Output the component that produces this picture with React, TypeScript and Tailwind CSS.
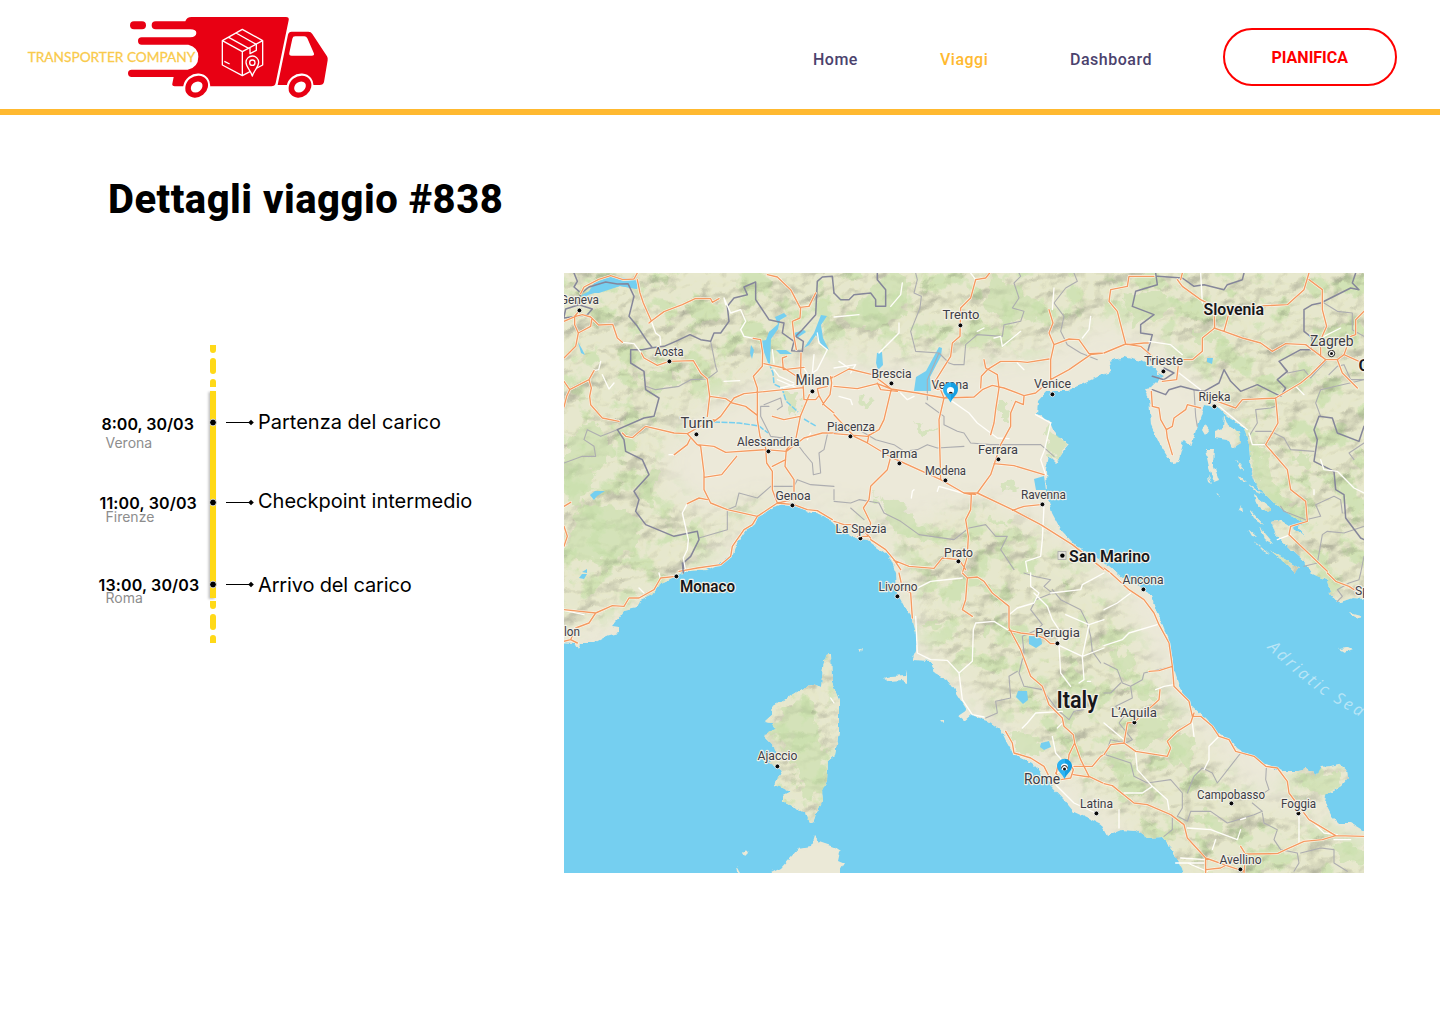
import React from 'react';

type Label = [string, number, number, number, number];

const cities: Label[] = [
  ['Geneva', -4, 31, 39, 13.5], ['Aosta', 90.5, 83, 29, 13.5], ['Milan', 231.5, 112, 34, 15],
  ['Turin', 116.5, 155, 33, 15], ['Alessandria', 173, 173, 62.5, 13.5], ['Genoa', 211.5, 227, 35, 13.5],
  ['Trento', 378.5, 46, 37, 13.5], ['Brescia', 307.5, 105, 40, 13.5], ['Verona', 367.5, 116, 37, 13.5],
  ['Venice', 470, 115.5, 37, 13.5], ['Piacenza', 263, 158, 48, 13.5], ['Parma', 317.5, 185, 36, 13.5],
  ['Modena', 361, 202, 41, 13.5], ['Ferrara', 414, 181, 40, 13.5], ['Ravenna', 457, 226, 45, 13.5],
  ['La Spezia', 271.5, 260, 51, 13.5], ['Prato', 380, 284, 29, 13.5], ['Zagreb', 746, 73, 43.5, 15],
  ['Trieste', 580, 92, 39, 13.5], ['Rijeka', 634.5, 128, 32, 13.5], ['lon', 0, 363.5, 16, 13.5],
  ['Ajaccio', 193.5, 487.5, 40, 13.5], ['Livorno', 314.5, 318.5, 39, 13.5], ['Perugia', 471, 364.5, 45, 13.5],
  ['Rome', 460, 511, 36, 15], ['Latina', 516, 535, 33, 13.5], ['Ancona', 558.5, 311.5, 41, 13.5],
  ['L’Aquila', 547, 444, 46, 13.5], ['Campobasso', 633, 526, 68, 13.5], ['Foggia', 717, 535.5, 35, 13.5],
  ['Avellino', 655.5, 591.5, 42, 13.5], ['Sp', 791, 322.5, 14, 13.5],
];

const countries: Label[] = [
  ['San Marino', 505, 288.5, 81, 16.5], ['Slovenia', 639.5, 42, 60.5, 16.5], ['Monaco', 116, 318.5, 55, 16.5],
  ['Italy', 492.5, 435, 41.5, 23], ['C', 794.5, 98, 11, 17],
];

const dots: [number, number][] = [
  [15, 37], [105, 88], [132, 161], [248, 118], [204, 178], [228, 232], [396, 52], [327, 110], [386, 121],
  [488, 121], [286, 163], [335, 190], [381, 207], [434, 186], [478, 231], [296, 265], [394, 288], [599, 98],
  [650, 133], [112, 303], [213, 493], [333, 323], [493, 370], [532, 540], [579, 316], [570, 449], [667, 530],
  [734, 540], [676, 596],
];

const mainland =
  'M-20 -20H820V327L788 325 774 330 766 320 763 307 753 303 747 300 740 288 723 273 710 260 707 250 716 247 740 262 734 254 742 251 727 243 710 230 693 213 687 197 685 172 680 155 663 143 655 135 640 132 637 143 632 157 627 173 620 167 616 182 614 189 608 190 603 183 595 170 587 152 585 125 580 116 587 115 597 105 590 95 577 88 560 84 545 88 547 99 540 101 520 110 503 118 483 118 474 128 473 142 485 148 490 160 505 172 500 178 492 190 485 183 482 197 483 220 488 240 497 257 512 273 530 283 545 293 560 305 579 315 587 323 592 337 600 355 605 370 608 390 612 403 617 418 628 433 643 447 653 460 667 467 672 475 680 480 693 487 707 493 717 498 730 498 743 495 753 502 757 494 767 493 775 491 783 497 784 505 777 513 762 522 761 530 767 542 775 550 787 550 800 558 820 566V620H626L615 590 608 575 598 564 582 565 572 558 557 557 543 563 537 552 523 545 510 539 500 527 487 513 477 500 467 490 450 482 443 470 437 457 423 447 407 442 400 448 394 443 403 437 392 420 383 407 370 400 367 388 348 387 352 378 352 360 347 342 340 333 333 320 332 300 325 283 317 277 303 267 290 265 278 258 268 248 253 240 247 240 230 232 217 231 203 237 193 245 190 253 182 257 173 270 168 283 157 290 143 297 123 298 113 303 97 310 89 321 76 327 73 335 60 338 48 353 55 354 55 360 43 363 30 370 15 370 14 377 10 370 -20 368Z';

const islands = [
  'M261 382L267 381 268 410 275 427 275 460 271 482 264 488 263 508 258 518 259 528 252 541 249 550 243 546 241 539 218 528 219 522 227 518 210 512 218 498 212 493 205 490 213 483 210 474 201 465 202 460 211 456 207 450 200 449 209 441 208 434 222 426 240 415 249 411 257 414 259 396Z',
  'M195 620L207 600 217 595 235 575 247 573 250 563 255 569 270 574 276 578 274 587 281 590 276 598V620Z',
  'M319 405L328 403 342 402 343 397 343 410 338 408 325 409Z',
  'M641 151L645 157 641 162 638 157ZM660 143L664 153 676 159 677 170 669 175 663 167 651 165 651 158 659 155Z',
  'M641 177L650 177 649 190 655 207 650 209 645 195Z',
  'M671 186L681 198 676 196ZM674 202L682 209 676 207ZM683 210L698 221 692 219ZM690 222L708 236 703 239 692 230ZM685 236L700 252 690 246ZM695 253L710 271 701 266ZM714 260L735 280 728 278ZM684 256L693 264 688 263ZM644 202L648 211 645 209ZM652 220L657 225 654 224ZM677 233L678 239 675 238Z',
  'M706 277L735 295 731 300 724 293ZM690 268L705 281 699 278Z',
  'M774 376L784 375 788 377 781 380ZM785 339L796 342 798 345 790 344Z',
  'M295 377L298 375 297 379ZM377 448L380 447 380 451ZM179 580L182 576 184 580 181 583ZM173 593L174 600 177 600Z',
];

const lakes = [
  'M14 32L18 22 33 14 52 9 74 9 73 16 56 13 37 18 24 22 18 30Z',
  'M24 20L30 10 45 4 62 5 74 8 73 16 56 13 35 20Z',
  'M350 118L352 104 362 98 375 74 378 75 377 83 366 104 367 118Z',
  'M196 68L202 67 205 59 214 51 211 44 220 40 223 43 216 47 214 56 207 66 206 90 204 90Z',
  'M257 42L263 43 257 52 259 65 265 77 258 73 252 62 245 72 240 75 250 60Z',
  'M313 80L318 79 319 92 314 97 312 90Z',
  'M470 206L480 203 482 217 472 217Z', 'M465 363L477 364 478 371 472 375 465 371Z',
  'M454 418L463 418 464 427 459 431 452 424Z', 'M477 470L485 468 487 474 480 477 476 474Z',
  'M187 72L190 77 188 86 186 80ZM212 77L222 77 228 81 216 81ZM230 60L240 57 242 59 233 65Z',
  'M14 69L18 76 21 82 17 80ZM26 222L31 218 41 218 33 223 30 227ZM643 85L649 85 648 91 643 89Z',
  'M18 301L23 301 20 306 15 305ZM18 299L23 296 23 300ZM594 100L600 103 597 105Z',
];

/* Motorways, one list for each 270 by 300 map tile, drawn at three times the tile's size. */
const roads: { at: string; orange: string; white: string; border: string; region: string }[] = [
  {
    at: 'translate(0 0) scale(.33333)',
    orange:
      'M50 62L60 42 104 19 140 8 177 20 210 18 220 0M220 20L228 60 238 90 262 144 300 116 355 95 395 76 440 77 445 88 465 77M262 144L255 150M0 145L35 130 55 125 80 132 104 156 146 154 160 195 175 208M45 115L32 130 32 155 43 180 80 160 83 140M43 180L35 220 0 255M0 325L17 350 65 325 75 320 90 293M75 320L82 345 77 370 80 395 115 435 165 445M17 350L8 370 0 402M232 240L240 255 280 277 315 265 388 263 410 300 430 318 437 370 430 430M437 370L485 377 505 390 545 400 580 427M450 445L470 430 510 375 540 362 718 344M568 196L590 200 596 240 595 280 568 310 580 345 580 440 588 490 605 525 608 570 625 595 625 650 640 690M610 5L640 12 680 50 708 103 735 100 755 60M710 103L708 135 685 145 690 190 697 230M711 240L710 300 718 344 720 380 755 380 765 368 760 347 790 340M736 365L709 430 695 500 667 530 663 580 690 620 690 680 640 690 580 730 490 710 440 690 420 650 420 600 410 520 400 515 370 482 330 480 245 460 205 494 185 490 175 480M370 482L400 465 450 440M400 515L450 520 485 538 605 530 667 535 720 495 775 480 810 480M665 560L625 580M331 545L370 515 378 498M420 613L473 605 518 550M370 692L405 675 430 680M580 730L565 755 540 770 505 820 500 850 470 875 400 885 345 895M640 690L690 695 730 710 760 713 805 740M600 272L660 285 710 318M625 430L660 440 709 430M800 310L803 330 798 365 776 395M765 368L780 395 810 420M0 700L20 688M0 760L10 790 0 820M660 290L720 283M668 250L655 255 658 290M800 317L810 310',
    white:
      'M262 145L275 180 288 190 290 215M485 95L480 75 500 120 530 110 545 145 530 170 540 190 568 196M90 293L104 290 110 265M115 305L135 348 150 330M175 208L210 212 232 240M480 325L527 323M330 545L315 545M370 692L355 720 373 800 370 830 358 855 365 895M630 290L645 310 690 330M690 335L650 345M625 230L630 270M640 320L700 345M720 285L735 310M750 245L745 300 760 290 785 240 790 230 765 210 760 180M730 500L740 480',
    border:
      'M30 0L40 25 30 42 45 55M40 95L50 62 75 42 125 27 160 33 192 32 210 70 195 130 220 160 250 205 265 224 300 220 335 205 378 185 410 200 440 205 450 180 470 180 495 145 490 100 510 75 550 65 540 42 575 27 575 80 615 140 660 150 655 180 690 205 683 233 715 235 718 205 695 190 715 170 755 125 760 25 775 12 805 10 810 60M265 224L235 230 200 230 200 270 240 295 245 350 285 375 270 430 240 435 160 470 180 500 185 535 235 560 255 605 210 655 225 680 215 715 245 755 330 790 400 775 405 800 380 850 358 870 360 895M0 132L5 108 45 95 85 108 70 125 0 135',
    region:
      'M440 205L455 280 460 295 430 318 380 320 345 340 275 350 245 340M0 570L55 550 95 550 90 520 60 500 70 470 110 490 160 470M615 400L590 400 590 430 605 460 620 490 690 500 720 540 745 570 748 605 770 600 765 540 780 530 790 485M810 640L740 635 700 620 690 640 620 640 580 675 525 660 515 700 490 710 490 770 405 795M600 395L650 375 655 400 640 410',
  },
  {
    at: 'translate(270 0) scale(.33333)',
    orange:
      'M467 0L455 15 425 20 410 75 380 105 378 190 355 210 350 250 325 290 300 330 320 350 330 375 315 440 320 620 390 660 430 660 535 710 620 755 715 815 810 890M0 312L45 288 115 305 172 348 250 360 330 375 420 372 445 350 475 337 510 345 570 368 605 360 650 320 705 290 770 245 810 240M0 340L70 347 130 332 172 348M172 348L150 440 135 470 100 490 0 482M0 425L60 490 100 510 170 552 320 620M100 510L105 485M450 260L455 285 490 305 495 345 485 410 480 450 470 485M440 345L442 310 460 290 500 265 550 265 580 268 645 258M645 110L657 150 645 180 660 215 650 260 650 320M660 215L705 198 735 200 765 242 810 240M570 370L568 395 545 385 530 420 530 460 500 515 485 560 470 605 430 660M480 572L540 578 630 605M535 712L570 700 620 695M170 552L160 590 110 640 105 680 88 705 110 750 100 790 70 790M110 800L155 830 180 860 200 890M390 660L412 665 410 710 395 740 403 790 400 850 385 900M180 862L225 880 300 886 325 855 375 860 395 890M0 745L30 755 70 755 110 795M130 330L140 350 190 355M335 375L350 345 300 350M395 660L425 665',
    white:
      'M410 0L425 20M205 30L200 65 170 100M0 132L75 125M195 150L195 180 135 240M15 265L45 285M660 45L655 110M770 130L765 170 745 195M355 385L405 420 430 450 490 495 525 497M570 290L550 270M650 450L632 530 620 560 635 605M630 700L625 800 620 850 575 865 580 895M310 655L315 640 385 660M232 675L235 655 240 650M430 175L450 165M480 195L500 190 505 220 560 175M605 425L650 450M200 360L220 380 240 370M15 370L50 380 55 395M0 285L65 275 50 300',
    border: 'M0 60L20 80 45 80 60 65 110 60 125 80 125 100 155 100 155 50 130 20 130 0',
    region:
      'M245 0L250 20 240 60 262 70 258 105 230 175 245 235 315 240 345 270 360 275 390 275 395 215 430 185 505 190 510 155 560 145 570 115 535 105 555 75 540 30 560 10 555 0M275 390L330 430 330 455 370 475 390 480 410 510 470 515 620 515 660 550M315 240L280 320 280 380M720 0L730 25 695 45 660 90 690 130 680 175 700 215 740 240 790 260M0 480L55 460 100 485 125 500 180 515 210 535 250 530 280 515 310 525 390 520M0 685L50 690 75 680 135 690 150 720 200 745 255 785 360 800 405 765 455 755 485 790 520 790 500 830 530 875 540 890M0 650V680M50 705L90 740',
  },
  {
    at: 'translate(540 0) scale(.33333)',
    orange:
      'M0 240L65 213 110 220 145 250M150 10L75 10 70 40 20 50 15 85 40 115 50 155 65 213M70 215L120 210 133 210M220 20L235 40 290 80 330 100 332 165 295 195 295 235 265 260 225 260 218 320 175 325M330 165L360 175 415 195 470 210 505 235 545 212 605 215 665 260 700 260 720 245 740 190 755 185 755 140 780 115M360 175L375 120 440 100 550 95 600 50 615 0M615 20L655 50 655 110 668 160 650 200 650 250M665 260L620 305 590 330 515 375 415 380 395 405 340 385M515 375L522 450 485 515 550 590 560 650 605 685 610 745 560 760 555 785 670 895M700 260L715 300 760 345M142 355L145 400 165 405 170 440 187 470 190 495 205 545M187 470L205 460 210 435 245 410 250 395 290 405M0 885L20 900M720 245L765 265M235 0L230 20',
    white:
      'M290 0L295 90M135 205L200 215 235 245M225 300L290 350M435 480L445 515 485 515M575 340L600 365M650 560L660 590 700 595 750 645 780 660M660 190L710 165M630 650L630 665M520 800L560 785M345 400L430 470',
    border:
      'M155 0L160 35 95 55 85 100 150 125 110 155 110 180 145 185 130 240 145 270M160 10L235 15 270 40 300 35 360 50 370 35 415 20 420 0M180 285L210 300 180 320 145 310M145 350L185 365 195 350 230 340 270 350 300 355 345 330 360 290 380 325 410 355 460 335 530 370 545 345 520 320 550 295 525 265 590 230 620 230 625 195 600 175 600 110 625 95 650 90 740 45 765 50 745 30 755 0M780 460L765 505 700 480 685 435 645 430 630 470 640 500 630 565 690 595 695 650 720 665 725 735 770 795 780 800',
    region:
      'M660 90L700 115 745 120 745 170 780 190M530 270L550 300 600 290 620 315 650 270M620 315L670 260M675 305L700 280 720 275 740 320 780 320M780 320L715 335 650 350 635 390 650 430M270 350L275 430 280 460M515 400L500 405 455 410 460 450 435 490M455 475L500 475 540 495 560 530 630 535M530 700L540 715 605 740 650 730 635 695 690 670 710 680 715 720M780 760L720 780 670 775 655 785 640 870 600 880M780 510L735 540 750 560M780 850L770 900',
  },
  {
    at: 'translate(0 300) scale(.33333)',
    orange: 'M0 110L95 120 145 98 180 100 195 75 225 75 270 50 290 15 335 10M95 120L75 150 35 165 20 200 40 210M0 205L20 200',
    white: 'M0 112L60 125M225 45L240 60M285 0L290 20M800 375L810 390',
    border: 'M358 0L355 -30',
    region: '',
  },
  {
    at: 'translate(270 300) scale(.33333)',
    orange:
      'M195 0L205 45 230 60 235 135M385 0L400 15 395 80 385 110 415 130M400 15L430 12 450 25 475 60 525 100 525 165 560 230 590 310 625 340 645 395 685 435 690 460 718 485 722 510 705 545 700 600M722 510L740 560 765 610 810 632M525 172L560 180 600 185 630 195 650 212 670 212M515 475L535 510 540 540 590 555 630 580 650 620M720 580L775 580 800 550 810 545M667 600L672 575 700 560 718 590 710 615 680 620 665 600M718 605L765 612',
    white:
      'M230 55L290 25 385 15M245 130L250 240 290 260 340 262 375 300 415 265 418 170 425 150 480 145 520 170M375 300L385 380 415 425 450 432M525 125L550 105 600 90 615 60 590 40 590 0M600 60L640 100 655 140 675 170 675 215 680 300 710 340M670 215L745 250 810 225M745 250L750 320 735 330M745 250L765 155 810 140M765 155L695 125M650 60L740 50 745 35 810 0M565 465L580 450 605 420 685 415M655 490L665 540 700 580 670 600M665 635L720 690 785 720M685 450L670 465M760 325L770 325',
    border: '',
    region:
      'M570 0L600 10 650 20 630 40 655 60 605 80 590 110 625 155 600 175 565 190 570 240 555 300 570 340 625 350M655 50L680 80 740 110 760 150 770 190 775 235 800 270M455 435L490 420 485 385 530 375 525 310 550 295M625 350L670 410 705 440 720 415 750 410',
  },
  {
    at: 'translate(540 300) scale(.33333)',
    orange:
      'M20 0L75 50 120 80 150 120 165 155 195 210 205 280 210 340 255 385 265 430 290 430 325 460 345 490 375 500 395 535 450 550 485 580 520 585 550 625 555 660 615 740 695 788 780 790M0 545L20 515 60 510 70 450 90 448 165 380 168 350M60 510L95 535 190 550 200 525 190 505 220 475 260 450 270 420M0 632L25 638 90 690 130 695 200 725 240 755 250 795 305 855 375 880 420 895M305 855V900M695 788L655 800 600 805 545 830 520 842 425 843 420 900M135 295L165 293 205 280M305 890L350 885 425 845 410 820M670 0L695 25 735 40 750 50',
    white:
      'M0 110L40 90 80 60M0 218L55 200 75 180 160 155M155 350L180 340 210 335M300 590L315 560 315 520 345 490M265 450L270 490M95 540L100 590 145 640 190 680 195 710M60 660L115 660 145 640M250 765L320 770 400 800 410 770M410 740L425 735M585 725L585 810M620 740L660 780 700 785M690 800L740 800M230 855L305 860M0 450L60 500M325 830L335 800M45 710V765M215 870L300 870M250 870L310 895',
    border: '',
    region:
      'M0 270L40 290 55 330 80 340 115 320 120 300 205 280M50 330L20 360 0 360M80 340L85 375 35 400 60 430 45 450 85 500 65 510 20 500 5 545 80 570 90 610 130 630 200 620 235 660 235 705 220 730 250 745 260 715 320 715 370 750 450 725 475 715 445 690M180 790L205 770 205 730M410 540L340 630 325 600 295 585 270 610 250 660M487 585L485 620 495 650 450 680M475 720L480 750 520 770 510 800 530 830 580 840 585 870 570 895M590 840L650 825 690 830 690 870 730 895M770 0L765 20 735 30 700 50 715 70 700 85',
  },
];

const hills =
  'M-20 -20H820V330H720L690 200 660 130 590 60 540 45 470 80 410 85 330 85 250 75 210 90 170 115 140 130 100 170 100 210 140 245 200 225 280 235 340 255 420 230 480 260 560 330 600 420 680 520 820 580V620H620L560 550 480 480 420 430 360 370 340 280 260 230 180 250 100 320 -20 370ZM200 370H280V550H200ZM725 490H790V530H725Z';

const greens =
  'M5 170L20 150 45 160 50 185 25 205 0 200ZM20 230L60 235 80 250 70 275 30 290 0 280ZM0 180L15 165 30 210 15 230 0 220ZM75 100L100 95 120 110 90 120ZM80 200L95 195 85 235 75 225ZM220 120L235 118 238 140 224 142ZM320 0L345 5 340 40 310 55 280 50ZM430 0L460 20 480 40 450 50 420 40ZM485 152L504 172 490 190 482 165ZM434 128L448 128 446 145 434 145ZM555 15L600 20 620 35 590 45 570 50ZM686 172L700 175 705 205 730 235 740 250 720 240 692 212ZM730 175L748 180 745 195 733 190ZM630 55L660 60 665 72 635 70ZM310 223L340 235 370 265 350 268 325 250ZM425 247L445 248 448 254 430 251ZM435 212L455 210 445 220ZM295 122L310 130 300 135ZM350 148L375 160 356 162ZM445 458L475 462 478 485 455 480ZM495 425L510 440 500 450ZM415 360L420 350 424 365ZM360 350L375 350 365 358ZM555 370L570 390 555 405 548 385ZM605 460L630 465 628 500 610 490ZM570 440L605 445 600 460 575 478ZM560 420L585 410 590 430ZM545 480L570 485 565 500 545 495ZM730 500L750 502 780 498 775 515 760 522 740 515ZM630 538L660 545 655 560 635 550ZM770 570L800 575V592L775 585ZM225 428L245 425 250 450 262 480 260 520 240 525 235 500 225 485 210 460 215 440ZM502 470L510 475 500 482ZM535 365L550 375 540 380Z';

function ItalyMap() {
  return (
    <svg className="block h-[600px] w-[800px] shrink-0 bg-[#75cff0]" viewBox="0 0 800 600" role="img" aria-label="Mappa del viaggio">
      <defs>
        <clipPath id="land">
          <path d={mainland} />
          {islands.map((d) => <path key={d} d={d} />)}
        </clipPath>
        <filter id="soft" x="-10%" y="-10%" width="120%" height="120%"><feGaussianBlur stdDeviation="12" /></filter>
        <filter id="edge" x="0" y="0" width="100%" height="100%">
          <feTurbulence type="fractalNoise" baseFrequency=".08" numOctaves="3" seed="4" result="n" />
          <feDisplacementMap in="SourceGraphic" in2="n" scale="22" xChannelSelector="R" yChannelSelector="G" />
        </filter>
        <filter id="relief" x="0" y="0" width="100%" height="100%" colorInterpolationFilters="sRGB">
          <feTurbulence type="fractalNoise" baseFrequency=".028 .04" numOctaves="3" seed="11" result="n" />
          <feColorMatrix in="n" values="0 0 0 0 0  0 0 0 0 0  0 0 0 0 0  1 0 0 0 0" result="h" />
          <feDiffuseLighting in="h" surfaceScale="8" diffuseConstant="1.2" lightingColor="#fffff0">
            <feDistantLight azimuth="225" elevation="58" />
          </feDiffuseLighting>
        </filter>
        <filter id="forest" x="0" y="0" width="100%" height="100%" colorInterpolationFilters="sRGB">
          <feTurbulence type="fractalNoise" baseFrequency=".04" numOctaves="4" seed="23" />
          <feColorMatrix values="0 0 0 0 .77  0 0 0 0 .88  0 0 0 0 .66  0 9 0 0 -4.8" />
        </filter>
        <filter id="coast" filterUnits="userSpaceOnUse" x="-15" y="-15" width="830" height="630">
          <feTurbulence type="fractalNoise" baseFrequency=".15" numOctaves="2" seed="7" result="n" />
          <feDisplacementMap in="SourceGraphic" in2="n" scale="5" xChannelSelector="R" yChannelSelector="G" />
        </filter>
        <mask id="highland"><path d={hills} fill="white" filter="url(#soft)" /></mask>
        <linearGradient id="pin"><stop offset=".5" stopColor="#2bb3f3" /><stop offset=".5" stopColor="#169fe2" /></linearGradient>
        <path id="adriatic" d="M703 375Q730 401 752 417T808 450" />
      </defs>
      <g filter="url(#coast)">
        <path d={mainland} fill="#ece9d9" />
        {islands.map((d) => <path key={d} d={d} fill="#ebe9d7" />)}
        <g clipPath="url(#land)">
          <g mask="url(#highland)">
            <rect x="-15" y="-15" width="830" height="630" fill="#e6e7cd" />
            <rect x="-15" y="-15" width="830" height="630" filter="url(#forest)" opacity=".6" />
            <rect className="mix-blend-multiply" x="-15" y="-15" width="830" height="630" filter="url(#relief)" opacity=".32" />
          </g>
        </g>
      </g>
      <g clipPath="url(#land)">
        <path d={greens} fill="#c8e0ac" opacity=".6" filter="url(#edge)" />
      </g>
      {lakes.map((d) => <path key={d} d={d} fill="#75cff0" />)}
      <g fill="none" stroke="#75cff0" strokeWidth="1.5" strokeDasharray="6 1.5">
        <path d="M205 90L209 100 210 111 218 115 222 128 234 139M240 146L252 153M150 149L175 150 195 153 204 160" />
      </g>
      {roads.map((tile) => (
        <g key={tile.at} transform={tile.at} fill="none" strokeLinejoin="round" strokeLinecap="round">
          <path d={tile.region} stroke="#adadb0" strokeWidth="3.3" />
          <path d={tile.border} stroke="#85869a" strokeWidth="4.5" />
          <path d={tile.white} stroke="#fffefa" strokeWidth="4" />
          <path d={tile.orange} stroke="#fff8ed" strokeWidth="7.5" />
          <path d={tile.orange} stroke="#f49b62" strokeWidth="4.2" />
        </g>
      ))}
      <text className="font-['Open_Sans'] italic" fontSize="16.5" letterSpacing="2.75" fill="#b9e5f6">
        <textPath href="#adriatic">Adriatic Sea</textPath>
      </text>
      {dots.map(([x, y]) => <circle key={`${x}-${y}`} cx={x + 0.4} cy={y + 0.4} r="2.4" fill="#080808" stroke="#fff" strokeWidth=".8" />)}
      <rect x="494" y="278.5" width="8" height="8" fill="#e5e4dc" stroke="#aaa" strokeWidth=".8" />
      <circle cx="498.4" cy="282.6" r="2.2" />
      <circle cx="767.5" cy="80.5" r="3.2" fill="#fff" stroke="#222" /><circle cx="767.5" cy="80.5" r="1.5" fill="#111" />
      <g className="font-['Roboto']" stroke="#f3f1e7" strokeWidth="2.4" strokeLinejoin="round" paintOrder="stroke">
        {cities.map(([name, x, y, width, size]) => (
          <text key={name} x={x} y={y - 0.5} textLength={width} lengthAdjust="spacingAndGlyphs" fontSize={size} fill="#3d3d46">{name}</text>
        ))}
        {countries.map(([name, x, y, width, size]) => (
          <text key={name} x={x} y={y} textLength={width} lengthAdjust="spacingAndGlyphs" fontSize={size} fontWeight="600" fill="#17171a">{name}</text>
        ))}
      </g>
      {[[386.5, 117.5], [500.5, 494]].map(([x, y]) => (
        <g key={x} transform={`translate(${x} ${y})`}>
          <path d="M0 12C-2 7-7.5 4-7.5-1A7.5 7.2 0 0 1 7.5-1C7.5 4 2 7 0 12Z" fill="url(#pin)" />
          <circle r="3.6" fill="#fff" />
        </g>
      ))}
      <path d="M384.5 120.5A2.3 2.3 0 0 1 389 120.5Z" fill="#111" />
      <path d="M497.5 495.5A3 3 0 0 1 503.5 495.5" fill="none" stroke="#222" />
      <circle cx="500.5" cy="496" r="1.5" fill="#111" />
    </svg>
  );
}

function Logo() {
  return (
    <svg className="ml-5 mt-[5px] block h-[100px] w-[320px]" viewBox="0 0 960 300" role="img" aria-label="Transporter Company">
      <g fill="#e80013">
        <rect x="330" y="49" width="48" height="24" rx="12" />
        <path d="M515 36H798Q808 36 806 46L767 234Q765 244 754 244H464Q455 244 457 236L461 216H335A11 11 0 0 1 335 194H503Q535 187 535 155 535 127 505 119H365A11 11 0 0 1 365 97H511Q529 96 529 84 529 73 511 73H407A12 12 0 0 1 407 49H496Q500 36 515 36Z" />
        <path d="M815 80H865Q873 80 877 87L921 154Q924 159 923 166L912 231Q910 240 899 240H773L804 89Q806 80 815 80Z" />
      </g>
      <path d="M826 94H853Q859 94 862 100L881 143Q885 152 875 152H815Q806 152 808 143L817 101Q818 94 826 94Z" fill="#fff" />
      {[530, 840].map((x) => (
        <g key={x}>
          <ellipse cx={x} cy="245" rx="42" ry="38" fill="#fff" transform={`rotate(-38 ${x} 245)`} />
          <ellipse cx={x} cy="245" rx="36" ry="31" fill="#e80013" transform={`rotate(-38 ${x} 245)`} />
          <ellipse cx={x} cy="246" rx="19" ry="15" fill="#fff" transform={`rotate(-38 ${x} 246)`} />
        </g>
      ))}
      <g fill="none" stroke="#fff" strokeWidth="4" strokeLinejoin="round">
        <path d="M667 73L728 107V180L667 212 607 180V107ZM607 107L667 140 728 107M667 140V212M626 97L686 130M648 84L709 118M690 127V146L709 136V117M613 169L629 177" />
        <path d="M697 213C692 195 678 187 678 172A19 19 0 0 1 716 172C716 187 702 195 697 213Z" fill="#e80013" />
        <circle cx="697" cy="173" r="8" />
      </g>
      <text className="font-['Lato']" x="23" y="170" fontSize="39" textLength="503" lengthAdjust="spacingAndGlyphs" fill="#f9ca4b" stroke="#f9ca4b" strokeWidth=".8">TRANSPORTER COMPANY</text>
    </svg>
  );
}

function Rail() {
  return (
    <svg className="h-[298px] w-6 shrink-0" viewBox="0 0 24 298" aria-hidden="true">
      <defs><filter id="shade" x="-100%" width="300%"><feDropShadow dx="-1.5" dy="1" stdDeviation="1.2" floodOpacity=".25" /></filter></defs>
      <g fill="#ffd918">
        <path d="M9 0H15V5A3 3 0 0 1 9 5ZM9 42V37A3 3 0 0 1 15 37V42ZM9 256H15V261A3 3 0 0 1 9 261ZM9 298V293A3 3 0 0 1 15 293V298Z" />
        <rect x="9" y="13" width="6" height="16" rx="3" /><rect x="9" y="269" width="6" height="16" rx="3" />
        <rect x="9" y="46" width="6" height="207" filter="url(#shade)" />
      </g>
      {[77.5, 157.5, 239.5].map((y) => <circle key={y} cx="12" cy={y} r="3.4" stroke="#fff" strokeWidth=".8" />)}
    </svg>
  );
}

function Connector() {
  return (
    <svg className="h-[7px] w-[29px] shrink-0" viewBox="0 0 29 7" aria-hidden="true">
      <path d="M0 3.5H25" stroke="#000" /><path d="M25 .7L27.8 3.5 25 6.3 22.2 3.5Z" />
    </svg>
  );
}

const stops = [
  { time: '8:00, 30/03', city: 'Verona', event: 'Partenza del carico', row: 'h-20', timeClass: 'pl-[101.5px] pt-3', cityClass: '', eventClass: 'pb-px' },
  { time: '11:00, 30/03', city: 'Firenze', event: 'Checkpoint intermedio', row: 'h-[82px]', timeClass: 'pl-[99.5px] pt-[11px] tracking-[0.15px]', cityClass: '-mt-[5px]', eventClass: 'pb-[3px]' },
  { time: '13:00, 30/03', city: 'Roma', event: 'Arrivo del carico', row: 'h-20', timeClass: 'pl-[98.5px] pt-[11px] tracking-[0.15px]', cityClass: '-mt-1.5', eventClass: 'pt-px tracking-[-0.15px]' },
];

export default function App() {
  return (
    <div className="h-[1024px] w-[1440px] overflow-hidden bg-white text-black">
      <header className="flex h-[115px] items-start border-b-[6px] border-[#ffb930]">
        <Logo />
        <nav className="ml-[473px] mt-12 flex font-['Roboto'] text-base font-medium leading-6 tracking-[0.5px] text-[#4b426d]">
          <a className="w-[127px]">Home</a>
          <a className="w-[130px] text-[#ffb930]">Viaggi</a>
          <a className="w-[153px]">Dashboard</a>
        </nav>
        <button className="mt-7 h-[58px] w-[173.5px] rounded-[29px] border-2 border-[#f00] pt-0.5 font-['Roboto'] text-base font-bold text-[#f00]">PIANIFICA</button>
      </header>
      <main>
        <h1 className="ml-[108px] pt-[61px] font-['Roboto'] text-[40px] font-extrabold leading-[48px] tracking-[0.48px]">Dettagli viaggio #838</h1>
        <div className="mt-[49px] flex items-start">
          <section className="mt-[72px] flex w-[564px] font-['Inter']">
            <div className="w-[201px] shrink-0 pt-14">
              {stops.map((s) => (
                <div key={s.city} className={s.row}>
                  <p className={`${s.timeClass} whitespace-nowrap text-base font-semibold leading-[22px]`}>{s.time}</p>
                  <p className={`${s.cityClass} pl-[105.5px] text-sm leading-4 text-[#8d8d8d]`}>{s.city}</p>
                </div>
              ))}
            </div>
            <Rail />
            <div className="pl-px pt-14">
              {stops.map((s) => (
                <div key={s.city} className={`${s.row} flex items-start pt-[10px]`}>
                  <div className="flex h-[23px] items-center">
                    <Connector />
                    <span className={`${s.eventClass} ml-[3px] whitespace-nowrap text-xl leading-[22px]`}>{s.event}</span>
                  </div>
                </div>
              ))}
            </div>
          </section>
          <ItalyMap />
        </div>
      </main>
    </div>
  );
}
